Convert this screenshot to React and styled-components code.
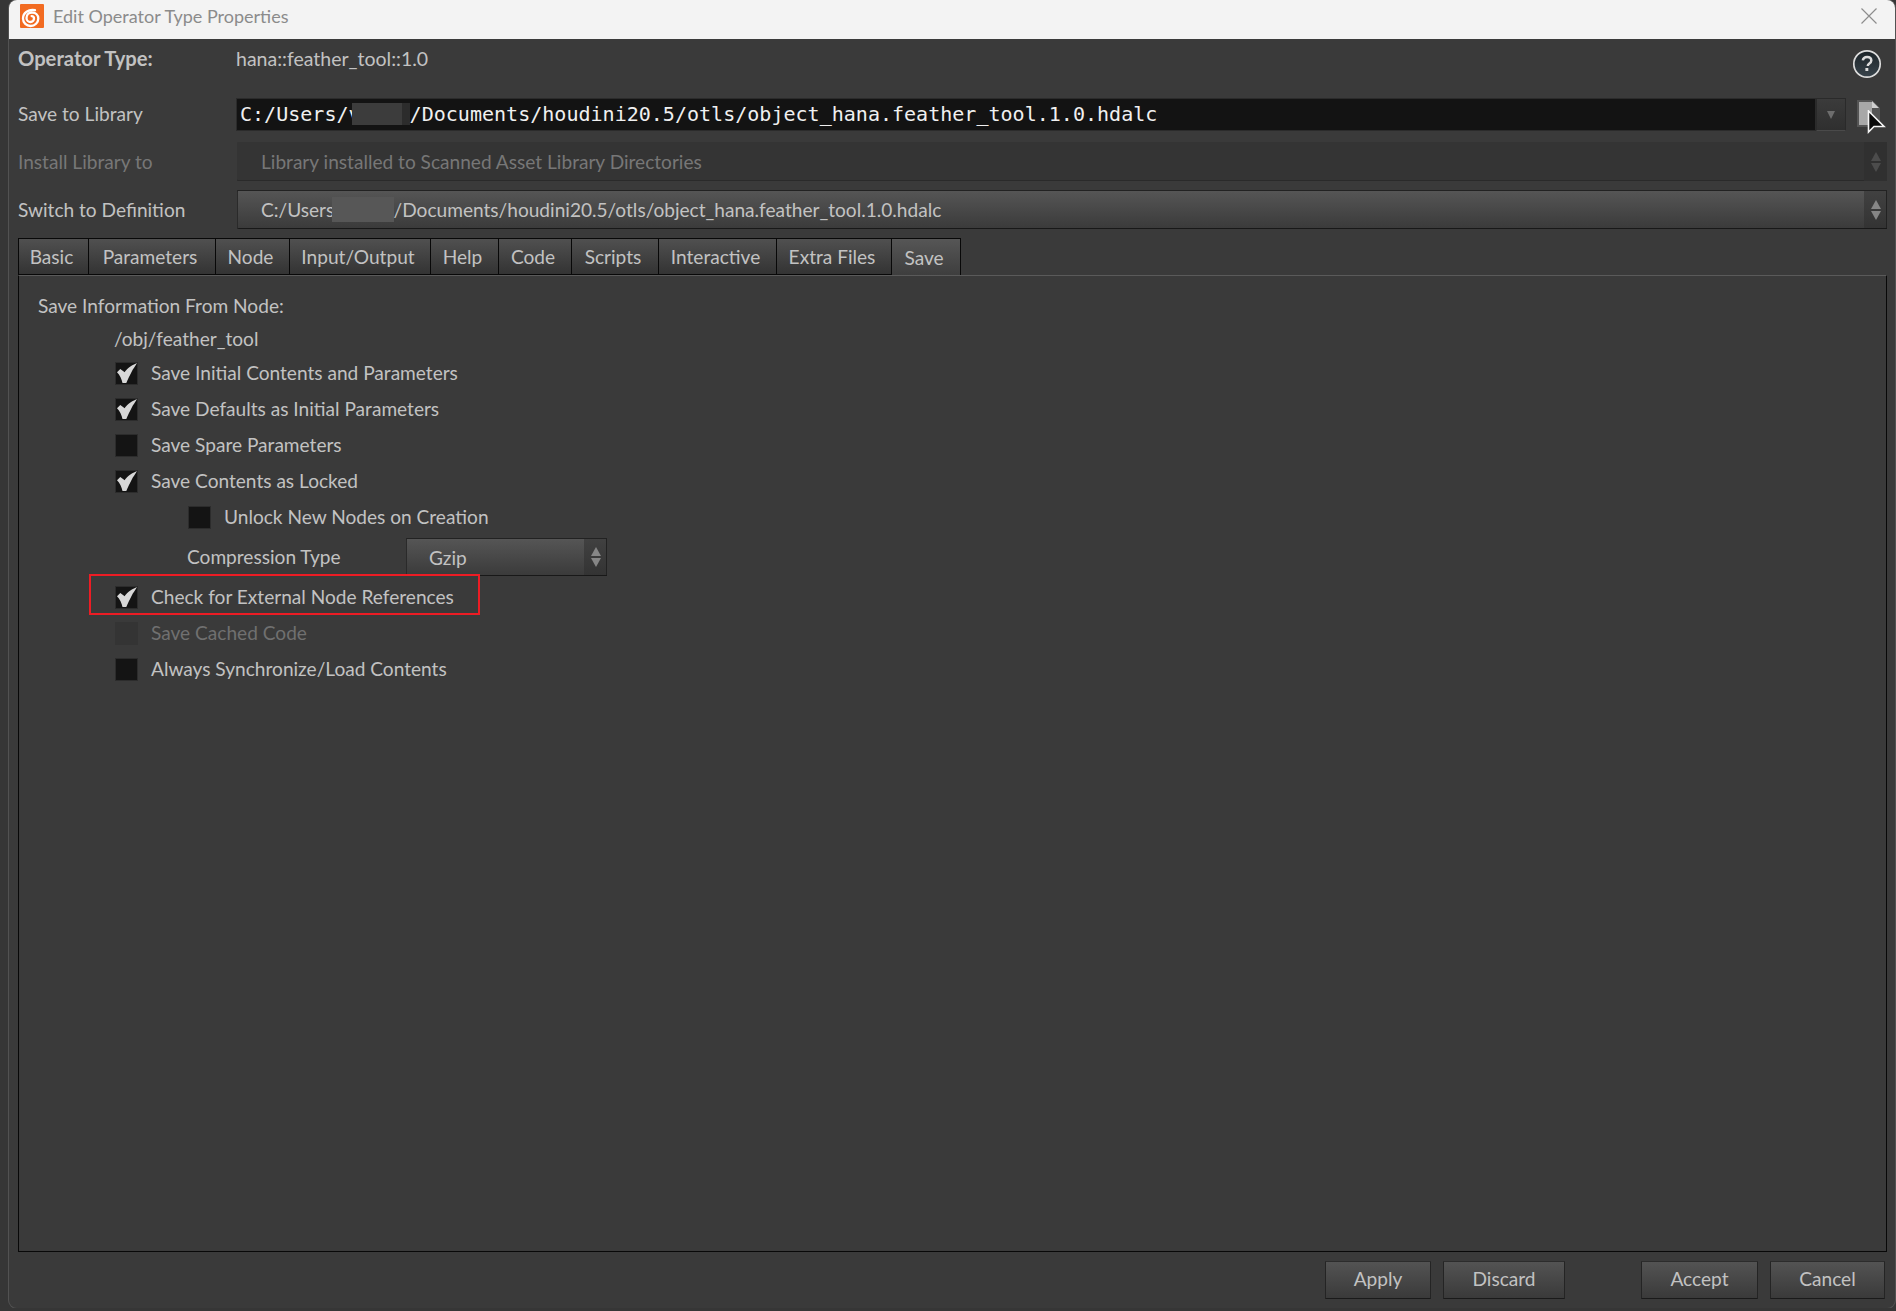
import styled, { createGlobalStyle } from "styled-components"

const GlobalStyle = createGlobalStyle`
  html, body {
    margin: 0;
    padding: 0;
    background: #363636;
  }
`

const Page = styled.div`
  box-sizing: border-box;
  height: 1308px;
  margin: 0 1px 0 9px;
  display: flex;
  flex-direction: column;
  background: #3a3a3a;
  border-radius: 8px;
  box-shadow: 0 0 0 1px #525252;
  overflow: hidden;
  font-family: Lato, "Noto Sans", sans-serif;
  font-size: 19.1px;
  color: #c2c2c2;
`

const TitleBar = styled.div`
  flex: none;
  box-sizing: border-box;
  height: 39px;
  background: #f3f3f3;
  display: flex;
  align-items: center;
  padding: 0 18px 7px 11px;
  color: #8b8b8b;
  font-size: 18px;
`

const TitleText = styled.span`
  margin-left: 9px;
  flex: 1;
`

const Body = styled.div`
  flex: 1;
  display: flex;
  flex-direction: column;
  padding: 0 8px 9px 9px;
  min-height: 0;
`

const InfoRow = styled.div`
  flex: none;
  height: 40px;
  display: flex;
  align-items: center;
  margin-bottom: 19px;
  padding: 0 5px 2px 0;
  box-sizing: border-box;
`

const FormRow = styled.div`
  flex: none;
  display: flex;
  align-items: center;
  margin-bottom: ${(p) => p.$gap}px;
`

const Label = styled.div`
  flex: none;
  width: 218px;
  padding-bottom: ${(p) => p.$lift || 0}px;
  color: ${(p) => (p.$dim ? "#777" : "inherit")};
`

const BoldLabel = styled(Label)`
  font-weight: 700;
  font-size: 20.2px;
`

const Value = styled.div`
  flex: 1;
  font-size: 19.5px;
`

const HelpIcon = styled.svg`
  flex: none;
  align-self: flex-start;
  margin-top: 10px;
  width: 30px;
  height: 30px;
`

const PathInput = styled.div`
  flex: none;
  box-sizing: border-box;
  width: 1580px;
  height: 33px;
  background: #131313;
  border: 1px solid #2b2b2b;
  padding: 0 0 1px 3px;
  display: flex;
  align-items: center;
  white-space: pre;
  font-family: "DejaVu Sans Mono", "Liberation Mono", monospace;
  font-size: 20.05px;
  color: #f0f0f0;
`

const Redaction = styled.span`
  flex: none;
  height: ${(p) => p.$height}px;
  width: ${(p) => p.$width}px;
  margin-left: ${(p) => p.$overlap * -1}px;
  background: ${(p) => p.$fill};
`

const DropButton = styled.div`
  flex: none;
  box-sizing: border-box;
  width: 30px;
  height: 33px;
  border: 1px solid #2a2a2a;
  border-bottom-color: #4a4a4a;
  background: linear-gradient(#3b3b3b, #2f2f2f);
  display: flex;
  align-items: center;
  justify-content: center;
`

const DownTriangle = styled.span`
  width: 0;
  height: 0;
  border-left: 4.5px solid transparent;
  border-right: 4.5px solid transparent;
  border-top: 8px solid #6d6d6d;
`

const FileSlot = styled.div`
  position: relative;
  flex: none;
  margin: -2px 0 0 11px;
  width: 23px;
  height: 27px;
`

const FileIcon = styled.svg`
  display: block;
  width: 23px;
  height: 27px;
`

const CursorIcon = styled.svg`
  position: absolute;
  left: 10px;
  top: 10px;
  width: 19px;
  height: 24px;
`

const MenuField = styled.div`
  flex: ${(p) => (p.$width ? "none" : 1)};
  width: ${(p) => (p.$width ? `${p.$width}px` : "auto")};
  margin-left: ${(p) => p.$inset || 0}px;
  box-sizing: border-box;
  height: ${(p) => p.$height}px;
  display: flex;
  align-items: center;
  padding-left: ${(p) => p.$pad}px;
  white-space: pre;
  color: ${(p) => (p.$disabled ? "#777" : "inherit")};
  background: ${(p) =>
    p.$disabled ? "#343434" : "linear-gradient(#565656, #3a3a3a)"};
  border-radius: 1px;
  box-shadow: ${(p) =>
    p.$disabled
      ? "inset 0 -1px 0 #2a2a2a"
      : "inset 0 1px 0 #222, inset 1px 0 0 #2a2a2a, inset 0 -1px 0 #181818, inset -1px 0 0 #222"};
`

const MenuText = styled.span`
  flex: 1;
  display: flex;
  align-items: center;
`

const ArrowsCell = styled.div`
  flex: none;
  align-self: stretch;
  width: 23px;
  display: flex;
  flex-direction: column;
  align-items: center;
  justify-content: center;
  gap: 2px;
  background: ${(p) =>
    p.$disabled ? "#303030" : "linear-gradient(#414141, #333)"};
  box-shadow: ${(p) =>
    p.$disabled ? "none" : "inset 0 1px 0 #222, inset 0 -1px 0 #181818, inset -1px 0 0 #222"};
`

const Arrow = styled.span`
  width: 0;
  height: 0;
  border-left: 5px solid transparent;
  border-right: 5px solid transparent;
  border-${(p) => (p.$up ? "bottom" : "top")}: 9px solid
    ${(p) => (p.$disabled ? "#4c4c4c" : "#868686")};
`

const TabBar = styled.div`
  position: relative;
  z-index: 1;
  flex: none;
  height: 37px;
  display: flex;
`

const Tab = styled.div`
  box-sizing: border-box;
  width: ${(p) => p.$width}px;
  display: flex;
  align-items: center;
  justify-content: center;
  padding-right: 4px;
  border: 1px solid #080808;
  border-left-width: ${(p) => (p.$first ? 1 : 0)}px;
  border-bottom-width: ${(p) => (p.$active ? 0 : 1)}px;
  background: ${(p) =>
    p.$active
      ? "linear-gradient(#565656, #3e3e3e)"
      : "linear-gradient(#505050, #333)"};
`

const Panel = styled.div`
  flex: 1;
  min-height: 0;
  margin-top: 0;
  box-sizing: border-box;
  border: 1px solid #080808;
  border-top: 1px solid #5a5a5a;
  padding: 17px 0 0 19px;
  margin-bottom: 9px;
  background: #3a3a3a;
`

const Heading = styled.div`
  height: 26px;
  line-height: 26px;
`

const NodePath = styled.div`
  height: 26px;
  line-height: 26px;
  margin: 7px 0 3px 76px;
`

const CheckRow = styled.div`
  position: relative;
  height: 36px;
  display: flex;
  align-items: center;
  gap: 13px;
  margin-left: ${(p) => (p.$indent ? 150 : 77)}px;
  color: ${(p) => (p.$disabled ? "#707070" : "inherit")};
`

const CheckLabel = styled.span`
  padding-bottom: 2px;
`

const CheckBox = styled.span`
  flex: none;
  box-sizing: border-box;
  width: 23px;
  height: 23px;
  display: flex;
  align-items: center;
  justify-content: center;
  background: ${(p) => (p.$disabled ? "#343434" : "#141414")};
  border: ${(p) => (p.$disabled ? "none" : "1px solid #2c2c2c")};
`

const TickIcon = styled.svg`
  width: 21px;
  height: 21px;
`

const Highlight = styled.div`
  position: absolute;
  left: -26px;
  top: -5px;
  width: 391px;
  height: 41px;
  box-sizing: border-box;
  border: 2px solid #ed1c24;
  pointer-events: none;
`

const ComboRow = styled.div`
  height: 38px;
  margin: 3px 0 3px 149px;
  display: flex;
  align-items: center;
`

const ComboLabel = styled.div`
  flex: none;
  width: 219px;
  padding-bottom: 1px;
`

const Footer = styled.div`
  flex: none;
  display: flex;
  justify-content: flex-end;
  gap: 12px;
  padding-right: 2px;
`

const FooterButton = styled.button`
  box-sizing: border-box;
  width: ${(p) => p.$width}px;
  height: 38px;
  margin-left: ${(p) => p.$offset || 0}px;
  border: 1px solid #242424;
  border-top-color: #2c2c2c;
  border-bottom-color: #1a1a1a;
  border-radius: 1px;
  background: linear-gradient(#535353, #3a3a3a);
  color: #c2c2c2;
  font: inherit;
  padding: 0 0 3px;
`

const tabs = [
  ["Basic", 71],
  ["Parameters", 127],
  ["Node", 74],
  ["Input/Output", 141],
  ["Help", 68],
  ["Code", 73],
  ["Scripts", 87],
  ["Interactive", 118],
  ["Extra Files", 115],
  ["Save", 69],
]

const Logo = () => (
  <svg width="24" height="24" viewBox="0 0 24 24" style={{ flex: "none" }}>
    <rect width="24" height="24" rx="1" fill="#f26b21" />
    <path
      d="M15 6.200C8.500 4.800 3 9 3 14.500 3 19 6.500 22 10.500 22c4.500 0 7.800-3.500 7.800-7.500 0-3.800-3-6-6.300-6-3.300 0-5.500 2.500-5.500 5.500 0 2.400 1.900 4 4 4 2 0 3.500-1.500 3.500-3.400 0-1.400-1-2.500-2.400-2.500"
      fill="none"
      stroke="#fff"
      strokeWidth="2.300"
      strokeLinecap="round"
    />
  </svg>
)

const CloseIcon = () => (
  <svg width="16" height="16" viewBox="0 0 16 16" style={{ flex: "none" }}>
    <path d="M.5.5l15 15M15.500.5l-15 15" stroke="#8d8d8d" strokeWidth="1.200" />
  </svg>
)

const Help = () => (
  <HelpIcon viewBox="0 0 30 30">
    <defs>
      <linearGradient id="helpFill" x1="0" y1="0" x2="0" y2="1">
        <stop offset="0" stopColor="#1b2328" />
        <stop offset="1" stopColor="#39444c" />
      </linearGradient>
    </defs>
    <circle cx="15" cy="15" r="13.200" fill="url(#helpFill)" stroke="#dcdcdc" strokeWidth="1.700" />
    <path
      d="M10.800 11.400c.4-2.300 2.100-3.500 4.300-3.500 2.400 0 4.200 1.400 4.200 3.500 0 1.700-1 2.500-2.200 3.300-1 .7-1.300 1.200-1.300 2.300"
      fill="none"
      stroke="#dcdcdc"
      strokeWidth="2.500"
    />
    <rect x="13.400" y="19" width="2.900" height="3" fill="#dcdcdc" />
  </HelpIcon>
)

const Tick = () => (
  <TickIcon viewBox="1 1 21 21">
    <path
      d="M2 10.300L5.300 7l4.400 3.300C11 7.800 15 4 22 1c-2 3.500-4 6-5.200 8.500C15 13 13 17 11.300 21H7.500C6.800 17.500 4.800 13 2 10.300z"
      fill="#d8d8d8"
    />
  </TickIcon>
)

const Check = ({ label, checked, disabled, indent, children }) => (
  <CheckRow $disabled={disabled} $indent={indent}>
    <CheckBox $disabled={disabled}>{checked && <Tick />}</CheckBox>
    <CheckLabel>{label}</CheckLabel>
    {children}
  </CheckRow>
)

const UpDown = ({ disabled }) => (
  <ArrowsCell $disabled={disabled}>
    <Arrow $up $disabled={disabled} />
    <Arrow $disabled={disabled} />
  </ArrowsCell>
)

const App = () => (
  <>
    <GlobalStyle />
    <Page>
      <TitleBar>
        <Logo />
        <TitleText>Edit Operator Type Properties</TitleText>
        <CloseIcon />
      </TitleBar>
      <Body>
        <InfoRow>
          <BoldLabel>Operator Type:</BoldLabel>
          <Value>hana::feather_tool::1.0</Value>
          <Help />
        </InfoRow>
        <FormRow $gap={11}>
          <Label $lift={2}>Save to Library</Label>
          <PathInput>
            C:/Users/v
            <Redaction
              $width={58}
              $height={22}
              $overlap={9}
              $fill="linear-gradient(90deg, #3c3c3c 86%, #2c2c2c 86%)"
            />
            /Documents/houdini20.5/otls/object_hana.feather_tool.1.0.hdalc
          </PathInput>
          <DropButton>
            <DownTriangle />
          </DropButton>
          <FileSlot>
            <FileIcon viewBox="0 0 23 27">
              <path d="M0 0h15l8 8v19H0z" fill="#555" />
              <path d="M2 2h13v23H2z" fill="#a8a8a8" />
              <path d="M15 1l7 7h-7z" fill="#d0d0d0" />
            </FileIcon>
            <CursorIcon viewBox="0 0 19 24">
              <path d="M1.500 1v21l5.500-5.500h10z" fill="#0a0a0a" stroke="#f5f5f5" strokeWidth="1.600" />
            </CursorIcon>
          </FileSlot>
        </FormRow>
        <FormRow $gap={9}>
          <Label $dim>Install Library to</Label>
          <MenuField $disabled $inset={1} $height={39} $pad={24}>
            <MenuText>Library installed to Scanned Asset Library Directories</MenuText>
            <UpDown disabled />
          </MenuField>
        </FormRow>
        <FormRow $gap={9}>
          <Label>Switch to Definition</Label>
          <MenuField $inset={1} $height={39} $pad={24}>
            <MenuText>
              C:/Users,
              <Redaction $width={62} $height={25} $overlap={7} $fill="#575757" />
              /Documents/houdini20.5/otls/object_hana.feather_tool.1.0.hdalc
            </MenuText>
            <UpDown />
          </MenuField>
        </FormRow>
        <TabBar>
          {tabs.map(([name, width], index) => (
            <Tab
              key={name}
              $width={width}
              $first={index === 0}
              $active={name === "Save"}
            >
              {name}
            </Tab>
          ))}
        </TabBar>
        <Panel>
          <Heading>Save Information From Node:</Heading>
          <NodePath>/obj/feather_tool</NodePath>
          <Check checked label="Save Initial Contents and Parameters" />
          <Check checked label="Save Defaults as Initial Parameters" />
          <Check label="Save Spare Parameters" />
          <Check checked label="Save Contents as Locked" />
          <Check indent label="Unlock New Nodes on Creation" />
          <ComboRow>
            <ComboLabel>Compression Type</ComboLabel>
            <MenuField $width={201} $height={38} $pad={23}>
              <MenuText>Gzip</MenuText>
              <UpDown />
            </MenuField>
          </ComboRow>
          <Check checked label="Check for External Node References">
            <Highlight />
          </Check>
          <Check disabled label="Save Cached Code" />
          <Check label="Always Synchronize/Load Contents" />
        </Panel>
        <Footer>
          <FooterButton $width={106}>Apply</FooterButton>
          <FooterButton $width={122}>Discard</FooterButton>
          <FooterButton $width={117} $offset={64}>Accept</FooterButton>
          <FooterButton $width={115}>Cancel</FooterButton>
        </Footer>
      </Body>
    </Page>
  </>
)

export default App
